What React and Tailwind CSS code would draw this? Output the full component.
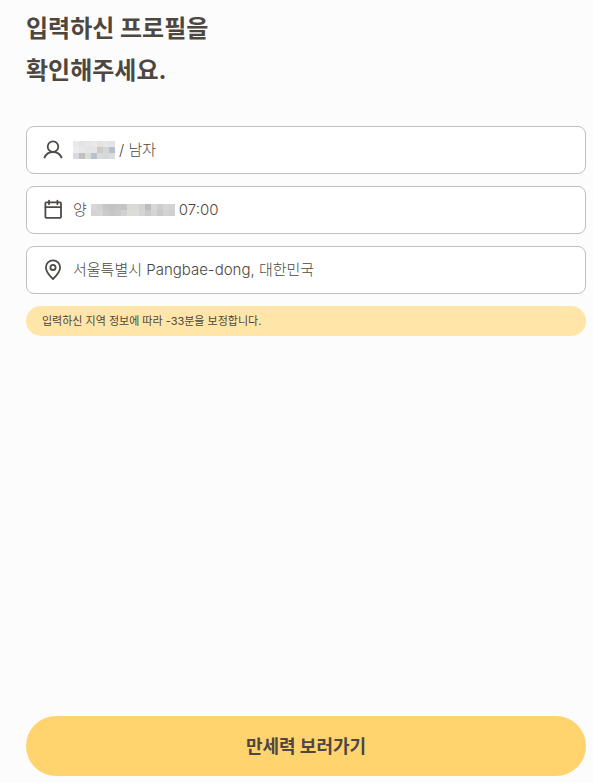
const NAME_MASK = [
  ["#e9e9e9", "#e3e3e3", "#e6e6e6", "#e9e9e9", "#e2e2e2", "#e6e6e6", "#e3e3e3"],
  ["#ececec", "#e8e8e8", "#e2e4e8", "#e4e4e6", "#cdcbca", "#d6d5d6", "#b9bfc9"],
  ["#d9dadd", "#c2c1c1", "#dcdcdd", "#bcc0ca", "#d9dade", "#d8d8da", "#d8dbe0"],
];

const BIRTH_MASK = [
  ["#d8d8d8", "#d2d2d2", "#c6c6c6", "#c3c3c3", "#c6c6c6", "#c3c3c3", "#d9d9d6", "#dadad7", "#d2d2d2", "#bdbdbd", "#d8d8d8", "#cecece", "#d6d6d6", "#d4d4d4"],
  ["#d3d3d3", "#d6d6d6", "#cacaca", "#c6c6c6", "#c9c9c9", "#d2d2d2", "#dcdcd9", "#dcdcd9", "#d4d4d4", "#cacaca", "#d4d4d4", "#c9c9c9", "#d2d2d2", "#cecece"],
];

function Mask({ rows, label }) {
  const width = rows[0].length * 6;
  const height = rows.length * 6;
  return (
    <svg role="img" aria-label={label} width={width} height={height} shapeRendering="crispEdges">
      {rows.map((row, y) =>
        row.map((fill, x) => (
          <rect key={`${x}-${y}`} x={x * 6} y={y * 6} width="6" height="6" fill={fill} />
        ))
      )}
    </svg>
  );
}

function Icon({ children }) {
  return (
    <svg
      className="size-6 shrink-0"
      viewBox="0 0 24 24"
      fill="none"
      stroke="#4d4b47"
      strokeWidth="1.8"
      strokeLinecap="round"
      strokeLinejoin="round"
      aria-hidden="true"
    >
      {children}
    </svg>
  );
}

function ProfileRow({ icon, children }) {
  return (
    <li className="flex h-12 items-center gap-2 rounded-lg border border-[#bfbfbf] bg-white px-[14px]">
      <Icon>{icon}</Icon>
      <p className="flex items-center gap-1 whitespace-nowrap">{children}</p>
    </li>
  );
}

export default function App() {
  return (
    <main className="flex min-h-screen flex-col bg-[#fcfcfc] pt-2 pr-[7px] pb-[7px] pl-[26px] font-['Inter','Noto_Sans_CJK_KR',sans-serif] text-[#4d4740]">
      <h1 className="text-[24px] leading-[42px] font-bold">
        입력하신 프로필을
        <br />
        확인해주세요.
      </h1>
      <ul className="mt-[34px] flex flex-col gap-3 text-[15px] leading-6 font-light">
        <ProfileRow
          icon={
            <>
              <circle cx="12" cy="8.7" r="5.3" />
              <path d="M3.3 20.2C4.5 16.4 7.8 14 12 14s7.5 2.4 8.7 6.2" strokeLinecap="butt" />
            </>
          }
        >
          <Mask rows={NAME_MASK} label="이름" />
          <span>/ 남자</span>
        </ProfileRow>
        <ProfileRow
          icon={
            <>
              <rect x="4.4" y="4.4" width="15.6" height="15.4" rx="0.8" />
              <path d="M4.4 9.1H20M8 2.6v3.6M16.4 2.6v3.6" />
            </>
          }
        >
          <span>양</span>
          <Mask rows={BIRTH_MASK} label="생년월일" />
          <span>07:00</span>
        </ProfileRow>
        <ProfileRow
          icon={
            <>
              <path d="M12 21C9.2 18.3 4.9 14 4.9 9.4a7.1 7.1 0 0 1 14.2 0c0 4.6-4.3 8.9-7.1 11.6Z" />
              <circle cx="12" cy="9.4" r="2.6" />
            </>
          }
        >
          <span>서울특별시 Pangbae-dong, 대한민국</span>
        </ProfileRow>
      </ul>
      <p className="mt-3 rounded-full bg-[#ffe5a8] px-4 text-[11px] leading-[30px]">
        입력하신 지역 정보에 따라 -33분을 보정합니다.
      </p>
      <button
        type="button"
        className="mt-auto h-[60px] shrink-0 cursor-pointer rounded-full bg-[#ffd36e] text-[18px] font-bold"
      >
        만세력 보러가기
      </button>
    </main>
  );
}
